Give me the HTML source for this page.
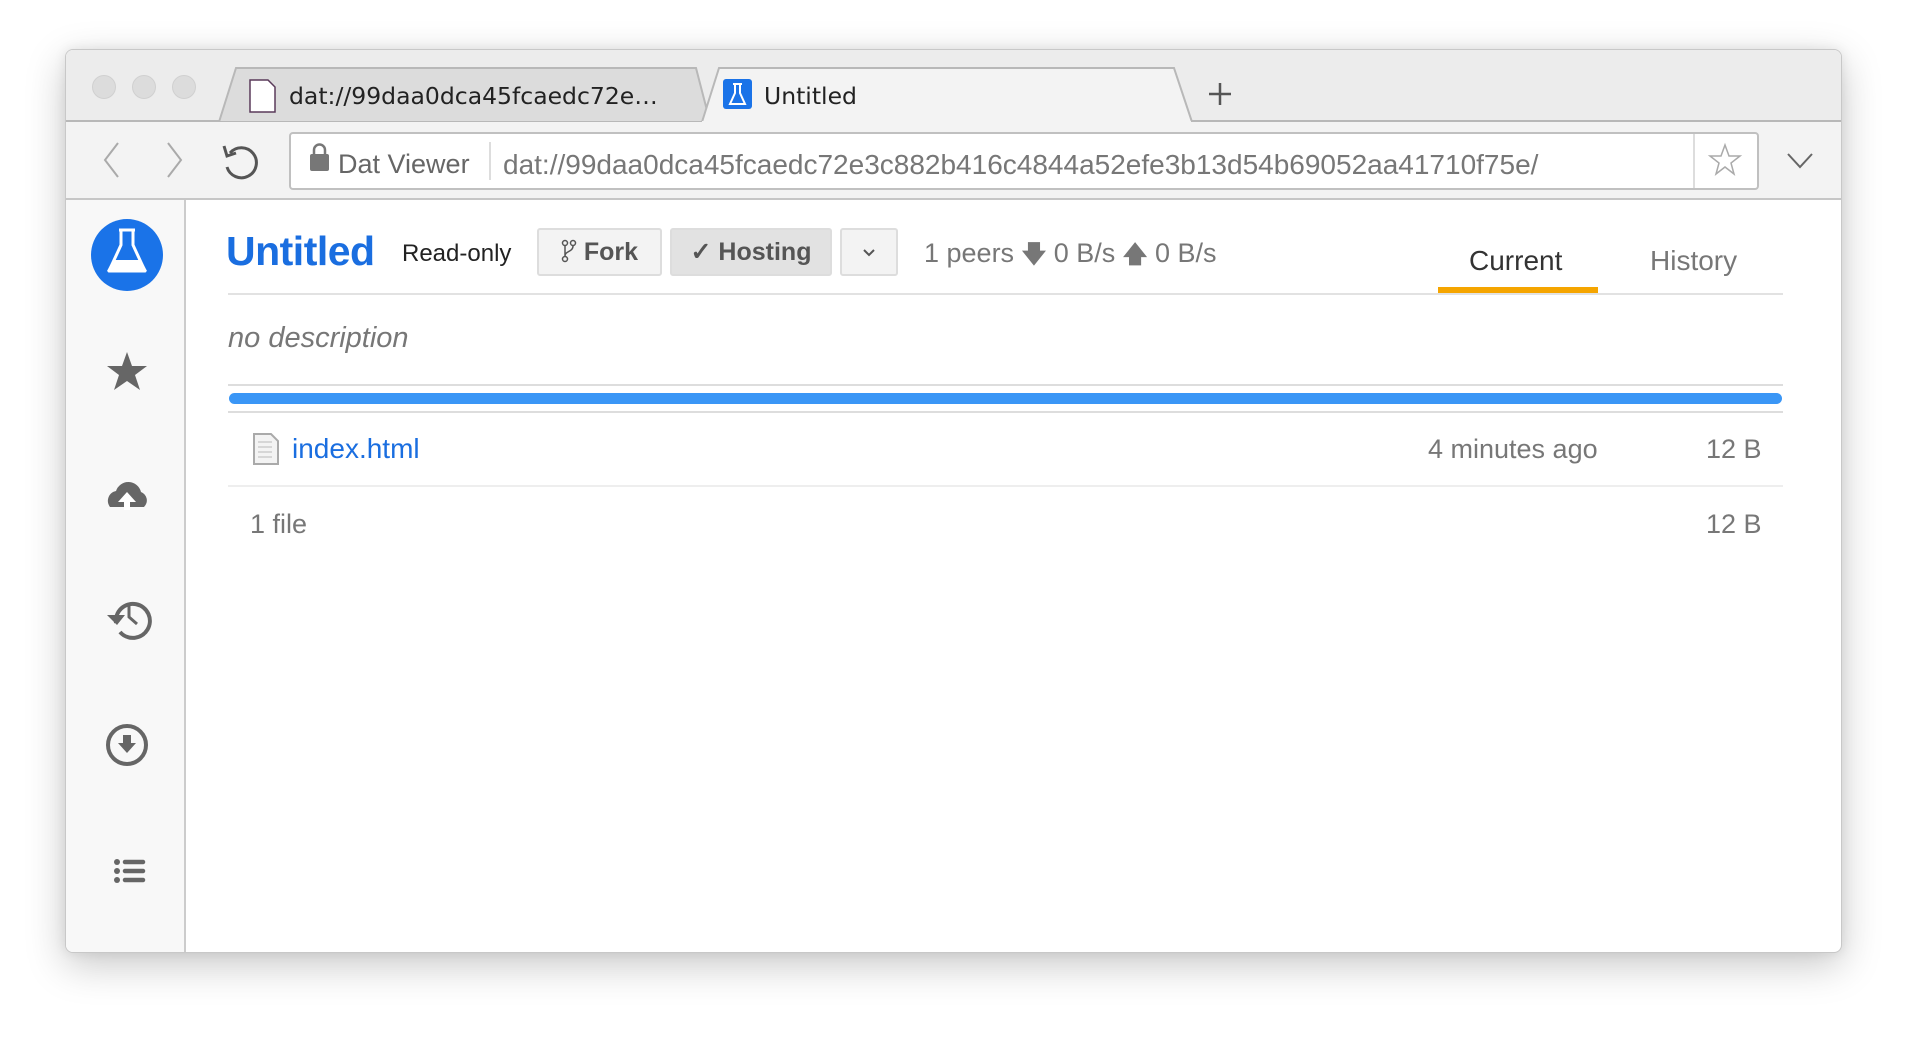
<!DOCTYPE html>
<html><head><meta charset="utf-8"><style>
*{box-sizing:border-box;margin:0;padding:0}
body{width:1922px;height:1038px;background:#fff;font-family:"Liberation Sans",sans-serif;position:relative;overflow:hidden}
.win{position:absolute;left:65px;top:49px;width:1777px;height:904px;border:1px solid #c8c8c8;border-radius:8px;background:#fff;box-shadow:0 12px 40px rgba(0,0,0,.22),0 0 12px rgba(0,0,0,.08);overflow:hidden}
.abs{position:absolute}
.tabbar{left:0;top:0;width:100%;height:72px;background:#ececec;border-bottom:2px solid #b8b8b8}
.toolbar{left:0;top:72px;width:100%;height:78px;background:#f3f3f3;border-bottom:2px solid #c6c6c6}
.dot{width:24px;height:24px;border-radius:50%;background:#dcdcdc;border:1px solid #d0d0d0;top:25px}
.side{left:0;top:150px;width:120px;height:760px;background:#f8f8f8;border-right:2px solid #ccc}
.t{position:absolute;white-space:nowrap}
.btn{position:absolute;top:178px;height:48px;border:2px solid #ddd;border-radius:3px;background:#f3f3f3;font-weight:bold;font-size:25px;color:#555;text-align:center;line-height:44px}
</style></head><body>
<div class="win">
 <div class="abs tabbar"></div>
 <div class="abs dot" style="left:26px"></div>
 <div class="abs dot" style="left:66px"></div>
 <div class="abs dot" style="left:106px"></div>
 <svg class="abs" style="left:0;top:0" width="1777" height="74">
  <path d="M153 72 L170 18 L630 18 L644 72 Z" fill="#dcdcdc" stroke="#b8b8b8" stroke-width="2"/>
  <path d="M636 72 L653 18 L1108 18 L1126 72" fill="#f3f3f3" stroke="#b8b8b8" stroke-width="2"/>
  <rect x="636" y="71" width="489" height="4" fill="#f3f3f3"/>
  <path d="M184 30 h18 l7 7 v25 h-25 z" fill="#fff" stroke="#5a3a5a" stroke-width="1.5"/>
  <rect x="657" y="29" width="29" height="30" rx="3" fill="#1a73e8"/>
  <path d="M667 34 h9 M669 34 v9 l-5 11 h15 l-5 -11 v-9" fill="none" stroke="#fff" stroke-width="2"/>
  <path d="M1154 33 v22 M1143 44 h22" stroke="#555" stroke-width="2.5"/>
 </svg>
 <div class="t" style="left:223px;top:32px;font-family:'DejaVu Sans',sans-serif;font-size:23.5px;color:#222">dat://99daa0dca45fcaedc72e…</div>
 <div class="t" style="left:698px;top:32px;font-family:'DejaVu Sans',sans-serif;font-size:23.5px;color:#222">Untitled</div>
 <div class="abs toolbar"></div>
 <svg class="abs" style="left:0;top:72px" width="1777" height="78">
  <path d="M52 21 l-13 17 l13 17" fill="none" stroke="#aaa" stroke-width="2"/>
  <path d="M102 21 l13 17 l-13 17" fill="none" stroke="#aaa" stroke-width="2"/>
  <path d="M164 31 a15 15 0 1 1 -3 14" fill="none" stroke="#555" stroke-width="3"/>
  <path d="M158 24 l3 10 l9 -3" fill="none" stroke="#555" stroke-width="3"/>
  <rect x="224" y="11" width="1468" height="56" rx="3" fill="#fff" stroke="#c0c0c0" stroke-width="2"/>
  <line x1="1628" y1="12" x2="1628" y2="66" stroke="#ddd" stroke-width="2"/>
  <line x1="424" y1="20" x2="424" y2="58" stroke="#ddd" stroke-width="2"/>
  <rect x="244" y="32" width="19" height="17" rx="2" fill="#777"/>
  <path d="M248 33 v-5 a5.5 5.5 0 0 1 11 0 v5" fill="none" stroke="#777" stroke-width="2.5"/>
  <path d="M1659 23 l4 11 h11 l-9 7 l3 11 l-9 -7 l-9 7 l3 -11 l-9 -7 h11 z" fill="none" stroke="#aaa" stroke-width="1.5"/>
  <path d="M1722 32 l12 13 l12 -13" fill="none" stroke="#666" stroke-width="2"/>
 </svg>
 <div class="t" style="left:272px;top:99px;font-size:27px;color:#666">Dat Viewer</div>
 <div class="t" style="left:437px;top:99px;font-size:28px;color:#777">dat://99daa0dca45fcaedc72e3c882b416c4844a52efe3b13d54b69052aa41710f75e/</div>

 <div class="abs side"></div>
 <svg class="abs" style="left:0;top:150px" width="120" height="760">
  <circle cx="61" cy="55" r="36" fill="#1a73e8"/>
  <path d="M53 30 h16 M55 30 v15 l-12 26 h36 l-12 -26 v-15" fill="none" stroke="#fff" stroke-width="3" stroke-linejoin="round"/>
  <path d="M47 60 h28 l6 11 h-40 z" fill="#fff"/>
  <path d="M61 152 l5 14 h15 l-12 9 l5 15 l-13 -9 l-13 9 l5 -15 l-12 -9 h15 z" fill="#666"/>
  <g transform="translate(0,34)">
  <path d="M44 273 a10 10 0 0 1 6 -16 a13 13 0 0 1 25 1 a9 9 0 0 1 3 15 z" fill="#666"/>
  <path d="M61 258 l-9 10 h6 v8 h6 v-8 h6 z" fill="#fff"/>
  </g>
  <g transform="translate(0,33)">
  <path d="M50 390 a17 17 0 1 1 4 9" fill="none" stroke="#666" stroke-width="4"/>
  <path d="M41 382 l10 10 l8 -10 z" fill="#666"/>
  <path d="M63 371 v13 l8 7" fill="none" stroke="#666" stroke-width="3"/>
  </g>
  <g transform="translate(0,5)">
  <circle cx="61" cy="540" r="19" fill="none" stroke="#666" stroke-width="4"/>
  <path d="M57 530 h8 v8 h5 l-9 10 l-9 -10 h5 z" fill="#666"/>
  </g>
  <g transform="translate(0,21)">
  <circle cx="51" cy="641" r="3" fill="#666"/><circle cx="51" cy="650" r="3" fill="#666"/><circle cx="51" cy="659" r="3" fill="#666"/>
  <path d="M59 641 h18 M59 650 h18 M59 659 h18" stroke="#666" stroke-width="4.5" stroke-linecap="round"/>
  </g>
 </svg>

 <div class="t" style="left:160px;top:178px;font-size:41px;font-weight:bold;color:#1a6ee0;letter-spacing:-0.5px">Untitled</div>
 <div class="t" style="left:336px;top:190px;font-size:24px;color:#222">Read-only</div>
 <div class="btn" style="left:471px;width:125px"><svg width="16" height="24" style="vertical-align:-3px" viewBox="0 0 16 24"><circle cx="4" cy="4" r="2.5" fill="none" stroke="#555" stroke-width="1.5"/><circle cx="12" cy="4" r="2.5" fill="none" stroke="#555" stroke-width="1.5"/><circle cx="4" cy="20" r="2.5" fill="none" stroke="#555" stroke-width="1.5"/><path d="M4 7 v10 M12 7 c0 6 -8 5 -8 10" fill="none" stroke="#555" stroke-width="1.5"/></svg> Fork</div>
 <div class="btn" style="left:604px;width:162px;background:#e2e2e2">✓ Hosting</div>
 <div class="btn" style="left:774px;width:58px"><svg width="16" height="10" viewBox="0 0 16 10" style="vertical-align:2px"><path d="M3 2 l5 5 l5 -5" fill="none" stroke="#555" stroke-width="2"/></svg></div>
 <div class="t" style="left:858px;top:187px;font-size:27px;color:#777">1 peers <b style="font-size:24px">&#129095;</b> 0 B/s <b style="font-size:24px">&#129093;</b> 0 B/s</div>
 <div class="t" style="left:1403px;top:195px;font-size:28px;color:#333">Current</div>
 <div class="abs" style="left:1372px;top:237px;width:160px;height:6px;background:#f5a500"></div>
 <div class="t" style="left:1584px;top:195px;font-size:28px;color:#777">History</div>
 <div class="abs" style="left:162px;top:243px;width:1555px;height:2px;background:#e2e2e2"></div>
 <div class="t" style="left:162px;top:272px;font-size:29px;font-style:italic;color:#777">no description</div>
 <div class="abs" style="left:162px;top:334px;width:1555px;height:2px;background:#ddd"></div>
 <div class="abs" style="left:163px;top:343px;width:1553px;height:11px;border-radius:6px;background:#3a96f6"></div>
 <div class="abs" style="left:162px;top:361px;width:1555px;height:2px;background:#ddd"></div>
 <svg class="abs" style="left:186px;top:382px" width="28" height="34"><path d="M2 2 h17 l7 7 v23 h-24 z" fill="#f3f3f3" stroke="#aaa" stroke-width="2"/><path d="M6 10 h14 M6 15 h14 M6 20 h14 M6 25 h14" stroke="#ccc" stroke-width="1.5"/></svg>
 <div class="t" style="left:226px;top:383px;font-size:28px;color:#1a6ee0">index.html</div>
 <div class="t" style="left:1362px;top:384px;font-size:27px;color:#777">4 minutes ago</div>
 <div class="t" style="left:1640px;top:384px;width:52px;text-align:right;font-size:27px;color:#777">12 B</div>
 <div class="abs" style="left:162px;top:435px;width:1555px;height:2px;background:#eee"></div>
 <div class="t" style="left:184px;top:459px;font-size:27px;color:#777">1 file</div>
 <div class="t" style="left:1640px;top:459px;width:52px;text-align:right;font-size:27px;color:#777">12 B</div>
</div>
</body></html>
